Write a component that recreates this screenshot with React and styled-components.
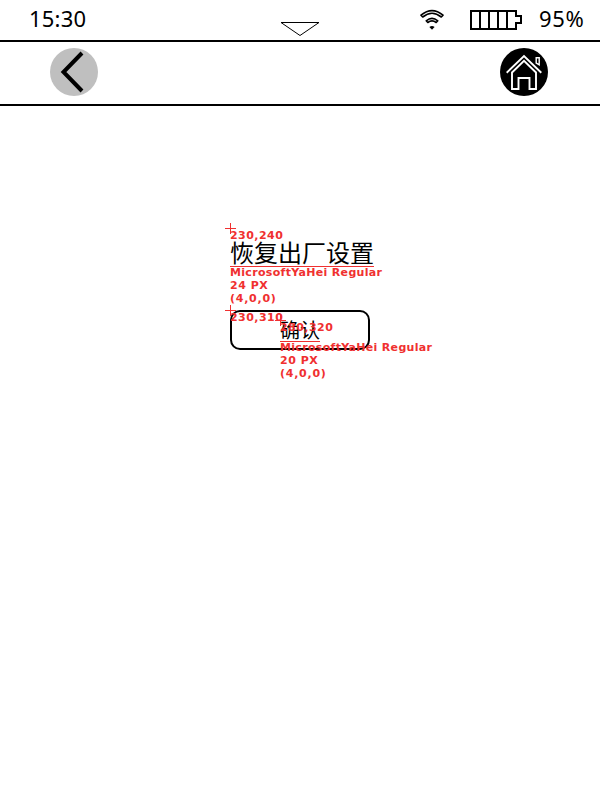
import React from 'react';
import styled, { createGlobalStyle } from 'styled-components';

const Global = createGlobalStyle`
  *{box-sizing:border-box}
  body{margin:0;background:#fff;color:#000;font-family:"Noto Sans","Noto Sans CJK SC",sans-serif}
`;
const Screen = styled.div`width:600px;height:800px;overflow:hidden;background:#fff;`;
const StatusBar = styled.header`
  height:42px;border-bottom:2px solid #000;display:grid;
  grid-template-columns:280px 40px 1fr;padding:0;
`;
const Clock = styled.time`padding-left:29px;font-size:22px;line-height:36px;letter-spacing:0.2px;`;
const Pull = styled.svg`display:block;width:40px;height:16px;margin-top:21px;`;
const Status = styled.div`display:flex;align-items:flex-start;padding-left:98px;`;
const Wifi = styled.svg`width:28px;height:24px;margin-top:8px;flex:none;`;
const Battery = styled.svg`width:52px;height:20px;margin:10px 0 0 24px;flex:none;`;
const Percent = styled.span`margin-left:17px;font-size:22px;line-height:36px;letter-spacing:0.7px;`;
const NavBar = styled.nav`
  height:64px;border-bottom:2px solid #000;display:flex;justify-content:space-between;
  padding:6px 52px 0 50px;
`;
const IconButton = styled.button`
  width:48px;height:48px;padding:0;border:0;border-radius:50%;background:${p => p.$fill};
  svg{display:block}
`;
const Content = styled.main`padding:134px 0 0 230px;`;
const Title = styled.h1`
  position:relative;margin:0;width:144px;height:27px;font-size:24px;line-height:24px;font-weight:400;
  font-family:"Noto Sans CJK SC",sans-serif;white-space:nowrap;border-bottom:1px solid #f03030;
`;
const Confirm = styled.button`
  position:relative;display:flex;align-items:flex-start;margin-top:43px;width:140px;height:40px;padding:8px 0 0 48px;
  border:2px solid #000;border-radius:10px;background:#fff;color:#000;text-align:left;
  font-family:"Noto Sans CJK SC",sans-serif;font-size:20px;line-height:20px;
`;
const Label = styled.span`position:relative;display:block;width:40px;height:22px;border-bottom:1px solid #f03030;`;
const Note = styled.span`
  position:absolute;left:${p => p.$left || 0}px;top:${p => p.$top}px;z-index:2;white-space:pre;color:#f03030;
  font:bold 11px/13px "DejaVu Sans",sans-serif;letter-spacing:0.45px;
`;
const NoteLine = styled.span`display:block;letter-spacing:${p => p.$spacing}px;`;
const Cross = styled.svg`
  position:absolute;left:${p => p.$left - 5}px;top:${p => p.$top}px;width:11px;height:11px;z-index:2;
`;

const Origin = ({ top, left = 0 }) => (
  <Cross $top={top} $left={left} viewBox="0 0 11 11"><path d="M0 5.5H11M5.5 0V11" stroke="#f03030" /></Cross>
);

const FontNote = ({ top, size }) => (
  <Note $top={top}>
    <NoteLine $spacing={0.32}>MicrosoftYaHei Regular</NoteLine>
    <NoteLine $spacing={0.5}>{`${size} PX`}</NoteLine>
    <NoteLine $spacing={0.75}>(4,0,0)</NoteLine>
  </Note>
);

export default function App() {
  return (
    <Screen>
      <Global />
      <StatusBar>
        <Clock>15:30</Clock>
        <Pull viewBox="0 0 40 16"><path d="M1 1.5H39L20 14.5Z" fill="none" stroke="#000" /></Pull>
        <Status>
          <Wifi viewBox="0 0 28 24" fill="none" stroke="#000" strokeWidth="1.6" strokeLinejoin="round">
            <path d="M3 7.2Q14 -2 25 7.2L23.3 9Q14 1.6 4.7 9Z" />
            <path d="M8.2 12.8Q14 8 19.8 12.8L18.2 14.5Q14 11.3 9.8 14.5Z" />
            <path d="M11.4 19Q14 16.8 16.6 19L14 21.8Z" fill="#000" stroke="none" />
          </Wifi>
          <Battery viewBox="0 0 52 20" fill="none" stroke="#000" strokeWidth="2">
            <path d="M1 1H46V6H51V13H46V19H1ZM10 1V19M19 1V19M28 1V19M37 1V19" />
          </Battery>
          <Percent>95%</Percent>
        </Status>
      </StatusBar>
      <NavBar>
        <IconButton $fill="#bfbfbf" aria-label="返回">
          <svg width="48" height="48"><path d="M32 5L13.5 24L32 43" fill="none" stroke="#000" strokeWidth="4" /></svg>
        </IconButton>
        <IconButton $fill="#000" aria-label="主页">
          <svg width="48" height="48" fill="none" stroke="#fff" strokeWidth="1.9">
            <path d="M6.7 24.7L24 8L41.3 24.7" />
            <path d="M12 24.5L24 12.8L36 24.5V41H29.5V30H18.5V41H12Z" />
            <path d="M36.2 9.7H39.2V16.7L36.2 15Z" strokeWidth="1.4" />
          </svg>
        </IconButton>
      </NavBar>
      <Content>
        <Title>
          恢复出厂设置
          <Origin top={-17} />
          <Note $top={-11}>230,240</Note>
          <FontNote top={26} size={24} />
        </Title>
        <Confirm>
          <Origin top={-7} left={-2} />
          <Note $top={-1} $left={-2}>230,310</Note>
          <Label>
            确认
            <Origin top={-5} />
            <Note $top={1}>280,320</Note>
            <FontNote top={21} size={20} />
          </Label>
        </Confirm>
      </Content>
    </Screen>
  );
}
